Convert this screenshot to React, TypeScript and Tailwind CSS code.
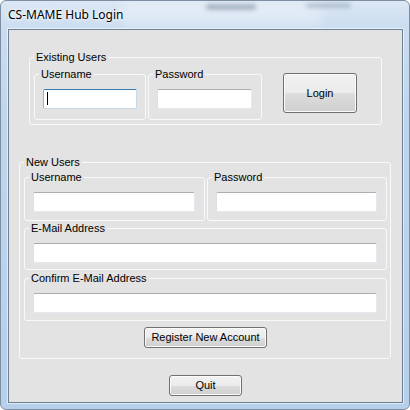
import type { ReactNode } from 'react';
import clsx from 'clsx';

function GroupBox({
    label,
    className,
    children,
}: {
    label: string;
    className?: string;
    children: ReactNode;
}) {
    return (
        <fieldset className={clsx('min-w-0 shrink-0 rounded-[3px] border border-[#f8f9fa] p-0', className)}>
            <legend className="ml-[4px] px-[2px] text-[11px] leading-[14px] text-black">{label}</legend>
            {children}
        </fieldset>
    );
}

function TextBox({ className, focused }: { className?: string; focused?: boolean }) {
    return (
        <div
            className={clsx(
                'h-[20px] rounded-[2px] border bg-white',
                focused
                    ? 'border-[#c5daed] border-l-[#8fb4d6] border-t-[#3d7bad]'
                    : 'border-[#e3e9ef] border-l-[#dbdfe6] border-t-[#abadb3]',
                className,
            )}
        >
            {focused && <div className="ml-[3px] mt-[2px] h-[13px] w-px bg-black" />}
        </div>
    );
}

function Button({ className, children }: { className?: string; children: ReactNode }) {
    return (
        <div
            className={clsx(
                'flex shrink-0 items-center justify-center rounded-[3px] border border-[#707070] text-[11px] text-black',
                'bg-[linear-gradient(#f2f2f2_0%,#ebebeb_50%,#dddddd_50%,#cfcfcf_100%)] shadow-[inset_0_0_0_1px_#fbfbfb]',
                className,
            )}
        >
            {children}
        </div>
    );
}

export default function App() {
    return (
        <div className="h-[410px] w-[410px] bg-white">
            <div className="relative flex h-[410px] w-[410px] flex-col overflow-hidden rounded-[6px] border border-[#7d8ea3] bg-[linear-gradient(180deg,#dbe7f4_0%,#cadcf0_7%,#bfd5ec_30%,#b6cfea_100%)]">
                {/* blurred glass behind the title bar */}
                <div className="pointer-events-none absolute left-[120px] top-[0px] h-[26px] w-[200px] bg-white/30 blur-[6px]" />
                <div className="pointer-events-none absolute left-[205px] top-[3px] h-[6px] w-[50px] rounded-full bg-[#56677b]/40 blur-[2px]" />
                <div className="pointer-events-none absolute left-[305px] top-[2px] h-[5px] w-[45px] rounded-full bg-[#56677b]/30 blur-[2px]" />

                {/* title */}
                <div className="relative flex h-[28px] shrink-0 items-center pl-[7px] font-['Noto_Sans',sans-serif] text-[12px] text-black [text-shadow:0_0_6px_#fff,0_0_3px_#fff]">
                    CS-MAME Hub Login
                </div>

                {/* client area */}
                <div className="relative ml-[7px] h-[374px] w-[395px] shrink-0 border border-[#6c7f93] bg-[#e3e3e3] shadow-[0_0_0_1px_rgba(255,255,255,0.55)]">
                    <div className="flex h-full flex-col font-['Liberation_Sans',Arial,sans-serif] text-[11px] text-black">
                        {/* Existing users */}
                        <GroupBox label="Existing Users" className="mx-[20px] mt-[20px]">
                            <div className="flex pb-[4px] pl-[4px]">
                                <GroupBox label="Username" className="mt-[3px] w-[112px]">
                                    <div className="pb-[10px] pl-[8px] pt-[8px]">
                                        <TextBox className="w-[94px]" focused />
                                    </div>
                                </GroupBox>
                                <GroupBox label="Password" className="ml-[2px] mt-[3px] w-[114px]">
                                    <div className="pb-[10px] pl-[8px] pt-[8px]">
                                        <TextBox className="w-[95px]" />
                                    </div>
                                </GroupBox>
                                <Button className="ml-[21px] mt-[9px] h-[40px] w-[74px]">Login</Button>
                            </div>
                        </GroupBox>

                        {/* New users */}
                        <GroupBox label="New Users" className="ml-[10px] mt-[30px] w-[372px]">
                            <div className="flex flex-col pb-[10px] pl-[4px] pr-[3px]">
                                <div className="mt-[1px] flex">
                                    <GroupBox label="Username" className="w-[181px]">
                                        <div className="pb-[8px] pl-[8px] pt-[8px]">
                                            <TextBox className="w-[162px]" />
                                        </div>
                                    </GroupBox>
                                    <GroupBox label="Password" className="ml-[2px] w-[180px]">
                                        <div className="pb-[8px] pl-[8px] pt-[8px]">
                                            <TextBox className="w-[161px]" />
                                        </div>
                                    </GroupBox>
                                </div>
                                <GroupBox label="E-Mail Address">
                                    <div className="pb-[6px] pl-[8px] pt-[8px]">
                                        <TextBox className="w-[344px]" />
                                    </div>
                                </GroupBox>
                                <GroupBox label="Confirm E-Mail Address" className="mt-[1px]">
                                    <div className="pb-[7px] pl-[8px] pt-[8px]">
                                        <TextBox className="w-[344px]" />
                                    </div>
                                </GroupBox>
                                <Button className="mt-[6px] h-[21px] w-[123px] self-center">
                                    Register New Account
                                </Button>
                            </div>
                        </GroupBox>

                        <Button className="mt-[16px] h-[21px] w-[73px] self-center">Quit</Button>
                    </div>
                </div>
            </div>
        </div>
    );
}
